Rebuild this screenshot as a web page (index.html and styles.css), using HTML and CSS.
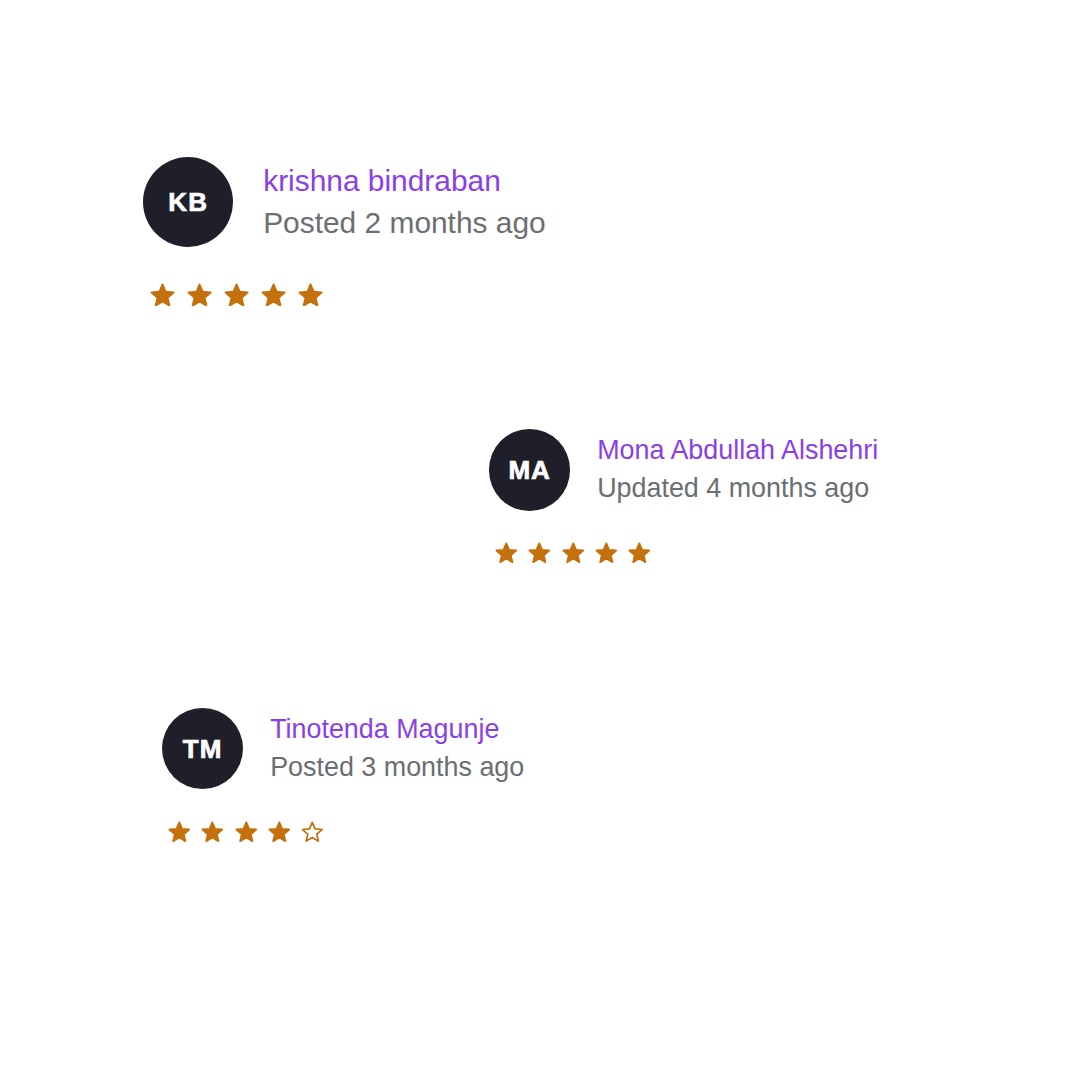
FILE: index.html
```html
<!DOCTYPE html>
<html lang="en">
<head>
<meta charset="utf-8">
<title>Reviews</title>
<link rel="stylesheet" href="styles.css">
</head>
<body>
<svg class="defs" width="0" height="0" aria-hidden="true">
  <defs>
    <path id="star" d="M12 17.27L18.18 21l-1.64-7.03L22 9.24l-7.19-.61L12 2 9.19 8.63 2 9.24l5.46 4.73L5.82 21z"/>
  </defs>
</svg>
<main class="reviews">
  <article class="review review--large review--first">
    <div class="review-head">
      <div class="avatar"><span class="avatar-initials">KB</span></div>
      <div class="review-meta">
        <div class="review-name">krishna bindraban</div>
        <div class="review-date">Posted 2 months ago</div>
      </div>
    </div>
    <div class="stars">
      <svg class="star" viewBox="0.6 0.6 22.8 21.8"><use href="#star"/></svg>
      <svg class="star" viewBox="0.6 0.6 22.8 21.8"><use href="#star"/></svg>
      <svg class="star" viewBox="0.6 0.6 22.8 21.8"><use href="#star"/></svg>
      <svg class="star" viewBox="0.6 0.6 22.8 21.8"><use href="#star"/></svg>
      <svg class="star" viewBox="0.6 0.6 22.8 21.8"><use href="#star"/></svg>
    </div>
  </article>

  <article class="review review--second">
    <div class="review-head">
      <div class="avatar"><span class="avatar-initials">MA</span></div>
      <div class="review-meta">
        <div class="review-name">Mona Abdullah Alshehri</div>
        <div class="review-date">Updated 4 months ago</div>
      </div>
    </div>
    <div class="stars">
      <svg class="star" viewBox="0.6 0.6 22.8 21.8"><use href="#star"/></svg>
      <svg class="star" viewBox="0.6 0.6 22.8 21.8"><use href="#star"/></svg>
      <svg class="star" viewBox="0.6 0.6 22.8 21.8"><use href="#star"/></svg>
      <svg class="star" viewBox="0.6 0.6 22.8 21.8"><use href="#star"/></svg>
      <svg class="star" viewBox="0.6 0.6 22.8 21.8"><use href="#star"/></svg>
    </div>
  </article>

  <article class="review review--third">
    <div class="review-head">
      <div class="avatar"><span class="avatar-initials">TM</span></div>
      <div class="review-meta">
        <div class="review-name">Tinotenda Magunje</div>
        <div class="review-date">Posted 3 months ago</div>
      </div>
    </div>
    <div class="stars">
      <svg class="star" viewBox="0.6 0.6 22.8 21.8"><use href="#star"/></svg>
      <svg class="star" viewBox="0.6 0.6 22.8 21.8"><use href="#star"/></svg>
      <svg class="star" viewBox="0.6 0.6 22.8 21.8"><use href="#star"/></svg>
      <svg class="star" viewBox="0.6 0.6 22.8 21.8"><use href="#star"/></svg>
      <svg class="star star--empty" viewBox="0.6 0.6 22.8 21.8"><use href="#star"/></svg>
    </div>
  </article>
</main>
</body>
</html>
```

FILE: styles.css
```css
html, body {
  margin: 0;
  padding: 0;
  background: #ffffff;
}

body {
  width: 1080px;
  height: 1080px;
  overflow: hidden;
  font-family: "Liberation Sans", Arial, sans-serif;
}

.defs {
  position: absolute;
  width: 0;
  height: 0;
  overflow: hidden;
}

.reviews {
  display: flex;
  flex-direction: column;
  align-items: flex-start;
  padding-top: 157px;
}

.review {
  font-size: 26.9px;
  display: flex;
  flex-direction: column;
  align-items: flex-start;
}

.review--large {
  font-size: 29.9px;
}

.review--first {
  margin-left: 143px;
}

.review--second {
  margin-left: 489px;
  margin-top: 123px;
}

.review--third {
  margin-left: 162px;
  margin-top: 144px;
}

.review-head {
  display: flex;
  align-items: center;
  gap: 1em;
}

.avatar {
  width: 3.02em;
  height: 3.02em;
  border-radius: 50%;
  background: #1e1f29;
  color: #ffffff;
  display: flex;
  align-items: center;
  justify-content: center;
  flex-shrink: 0;
}

.avatar-initials {
  font-family: "Liberation Sans", Arial, sans-serif;
  font-weight: 700;
  font-size: 26px;
  letter-spacing: 1px;
  line-height: 1;
  -webkit-text-stroke: 0.7px #ffffff;
}

.review-meta {
  display: flex;
  flex-direction: column;
  line-height: 1.4;
}

.review-name {
  color: #8a3ee8;
}

.review-date {
  color: #6a6f73;
}

.stars {
  display: flex;
  gap: 0.4em;
  margin-top: 1.18em;
  padding-left: 0.22em;
}

.star {
  width: 0.84em;
  height: 0.8em;
  display: block;
  fill: #c4700d;
  stroke: #c4700d;
  stroke-width: 1.9;
  stroke-linejoin: round;
}

.star--empty {
  fill: none;
  stroke-width: 1.7;
}
```
